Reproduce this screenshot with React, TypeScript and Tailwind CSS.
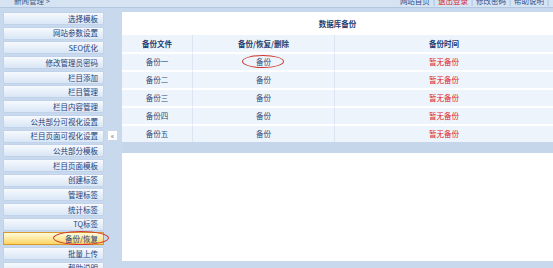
import React from 'react';

const menu = [
  '选择模板',
  '网站参数设置',
  'SEO优化',
  '修改管理员密码',
  '栏目添加',
  '栏目管理',
  '栏目内容管理',
  '公共部分可视化设置',
  '栏目页面可视化设置',
  '公共部分模板',
  '栏目页面模板',
  '创建标签',
  '管理标签',
  '统计标签',
  'TQ标签',
  '备份/恢复',
  '批量上传',
  '帮助说明',
];

const backups = ['备份一', '备份二', '备份三', '备份四', '备份五'];

const font = { fontFamily: '"Noto Sans CJK SC", "Noto Sans", sans-serif' };

function Ellipse({ className }: { className: string }) {
  return (
    <span
      className={
        'pointer-events-none absolute rounded-[50%] border border-[#d0362c] ' + className
      }
    />
  );
}

export default function App() {
  return (
    <div
      className="relative h-[268px] w-[553px] overflow-hidden bg-[#c8d9ee] text-[7.5px] leading-none"
      style={font}
    >
      {/* Top bar, cut off */}
      <div className="relative h-[8px] overflow-hidden border-b border-[#b3c7e1] bg-[#d6e3f3]">
        <span className="absolute -top-[3px] left-[14px] text-[#44597a]">新闻管理 &gt;</span>
        <div className="absolute -top-[3px] right-[4px] flex gap-[3px] text-[#2a4f8f]">
          <span>网站首页</span>
          <span className="text-[#8aa0c0]">|</span>
          <span className="text-[#d8262b]">退出登录</span>
          <span className="text-[#8aa0c0]">|</span>
          <span>修改密码</span>
          <span className="text-[#8aa0c0]">|</span>
          <span>帮助说明</span>
          <span className="text-[#8aa0c0]">|</span>
        </div>
      </div>

      <div className="flex pt-[4px]">
        {/* Sidebar */}
        <div className="flex w-[106px] shrink-0 flex-col gap-[1.7px] pl-[3px] pr-[2px]">
          {menu.map((item) => {
            const active = item === '备份/恢复';
            return (
              <div
                key={item}
                className={
                  active
                    ? 'relative flex h-[13px] items-center justify-end border border-[#d99a2c] bg-gradient-to-b from-[#fffbd8] to-[#ffd45e] pr-[5px] text-[#1d3f78]'
                    : 'relative flex h-[13px] items-center justify-end rounded-[1px] border border-[#c1d3ea] bg-gradient-to-b from-[#f7fafe] to-[#d9e6f5] pr-[5px] text-[#1d3f78]'
                }
              >
                {item}
                {active && <Ellipse className="-right-[6px] -top-[2px] h-[14px] w-[56px]" />}
              </div>
            );
          })}
        </div>

        {/* Toggle */}
        <div className="flex w-[16px] shrink-0 flex-col pt-[119px] pl-[2px]">
          <div className="flex h-[9px] w-[9px] items-center justify-center bg-white text-[7px] text-[#51688a]">
            «
          </div>
        </div>

        {/* Main */}
        <div className="flex-1">
          <div className="flex h-[249px] flex-col bg-white">
            <div className="flex h-[23px] items-center justify-center font-bold text-[#1c3b6f]">
              数据库备份
            </div>
            <div className="grid grid-cols-[71px_142px_1fr] bg-white">
              <div className="flex h-[17px] items-center justify-center border-r border-[#dbe5f1] bg-[#eef4fb] font-bold text-[#1c3b6f]">
                备份文件
              </div>
              <div className="flex h-[17px] items-center justify-center border-r border-[#dbe5f1] bg-[#eef4fb] font-bold text-[#1c3b6f]">
                备份/恢复/删除
              </div>
              <div className="flex h-[17px] items-center justify-center bg-[#eef4fb] font-bold text-[#1c3b6f]">
                备份时间
              </div>
              {backups.map((b, i) => (
                <React.Fragment key={b}>
                  <div className="flex h-[18px] items-center justify-center border-r border-t-2 border-r-[#dbe5f1] border-t-white bg-[#eef4fb] text-[#2e4b7c]">
                    {b}
                  </div>
                  <div className="relative flex h-[18px] items-center justify-center border-r border-t-2 border-r-[#dbe5f1] border-t-white bg-[#eef4fb] text-[#2e4b7c]">
                    备份
                    {i === 0 && <Ellipse className="left-[49px] top-[1px] h-[13px] w-[42px]" />}
                  </div>
                  <div className="flex h-[18px] items-center justify-center border-t-2 border-t-white bg-[#eef4fb] text-[#e0252d]">
                    暂无备份
                  </div>
                </React.Fragment>
              ))}
            </div>
            <div className="h-[11px] bg-[#c5d6ea]" />
            <div className="flex-1 bg-white" />
          </div>
        </div>
      </div>
    </div>
  );
}
